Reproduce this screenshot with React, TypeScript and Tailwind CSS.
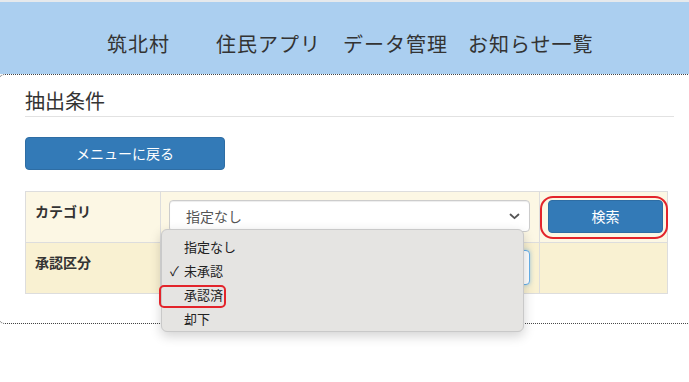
import React from 'react';

const font = { fontFamily: '"Noto Sans CJK JP", "Noto Sans", sans-serif' };

function Chevron() {
  return (
    <svg width="11" height="7" viewBox="0 0 11 7" className="shrink-0">
      <path d="M1.5 1.5 L5.5 5.2 L9.5 1.5" fill="none" stroke="#555" strokeWidth="1.8" strokeLinecap="round" strokeLinejoin="round" />
    </svg>
  );
}

export default function App() {
  const options = ['指定なし', '未承認', '承認済', '却下'];

  return (
    <div className="w-[689px] h-[382px] overflow-hidden bg-white text-[#333]" style={font}>
      {/* Header */}
      <header className="h-[74px] border-t-2 border-[#e6e9ec] bg-[#abcff0]">
        <nav className="flex items-center h-full pl-[107px] pt-[12px] text-[20px] text-[#333] tracking-[1px]">
          <span>筑北村</span>
          <span className="ml-[46px]">住民アプリ</span>
          <span className="ml-[22px]">データ管理</span>
          <span className="ml-[20px]">お知らせ一覧</span>
        </nav>
      </header>

      {/* Main card */}
      <div className="-ml-[3px] w-[710px] h-[250px] border border-dotted border-[#444] rounded-lg pl-[27px] pt-[12px]">
        <h2 className="w-[649px] text-[20px] leading-[28px] text-[#333] border-b border-[#e2e2e2] pb-[1px]">抽出条件</h2>

        <button className="mt-[20px] w-[200px] h-[33px] rounded bg-[#337ab7] border border-[#2e6da4] text-white text-[14px]">
          メニューに戻る
        </button>

        <table className="mt-[21px] w-[643px] border-collapse text-[14px]">
          <tbody>
            <tr className="h-[51px] bg-[#fcf7e4]">
              <th className="w-[136px] border border-[#ddd] align-top text-left font-bold pl-[9px] pt-[9px]">カテゴリ</th>
              <td className="relative w-[379px] border border-[#ddd] align-top pl-[8px] pt-[8px]">
                <div className="flex items-center justify-between w-[361px] h-[32px] rounded bg-white border border-[#ccc] pl-[16px] pr-[9px] text-[14px] text-[#555] shadow-[inset_0_1px_1px_rgba(0,0,0,0.075)]">
                  <span>指定なし</span>
                  <Chevron />
                </div>

                {/* Open dropdown */}
                <div className="absolute z-10 left-0 top-[37px] w-[363px] h-[103px] rounded-md bg-[#e5e4e2] border border-[#c9c9c9] shadow-[0_4px_12px_rgba(0,0,0,0.18)] pt-[5px] text-[13px] text-[#222]">
                  {options.map((o, i) => (
                    <div key={o} className="relative h-[24px] leading-[24px] pl-[22px]">
                      {i === 1 && <span className="absolute left-[8px] top-0 text-[13px]">✓</span>}
                      {o}
                    </div>
                  ))}
                  <div className="absolute left-[-3px] top-[55px] w-[67px] h-[23px] rounded-[5px] border-2 border-[#e3242b]" />
                </div>
              </td>
              <td className="relative w-[128px] border border-[#ddd] align-top pl-[8px] pt-[8px]">
                <button className="w-[115px] h-[33px] rounded bg-[#337ab7] border border-[#2e6da4] text-white text-[14px]">検索</button>
                <div className="absolute left-[0px] top-[4px] w-[128px] h-[43px] rounded-[13px] border-[2.5px] border-[#e3242b]" />
              </td>
            </tr>
            <tr className="h-[51px] bg-[#f9f1d2]">
              <th className="border border-[#ddd] align-top text-left font-bold pl-[9px] pt-[9px]">承認区分</th>
              <td className="border border-[#ddd] align-top pl-[8px] pt-[7px]">
                <div className="flex items-center justify-end w-[361px] h-[35px] rounded bg-white border border-[#66afe9] pr-[9px] shadow-[0_0_4px_rgba(102,175,233,0.6)]">
                  <Chevron />
                </div>
              </td>
              <td className="border border-[#ddd]" />
            </tr>
          </tbody>
        </table>
      </div>
    </div>
  );
}
